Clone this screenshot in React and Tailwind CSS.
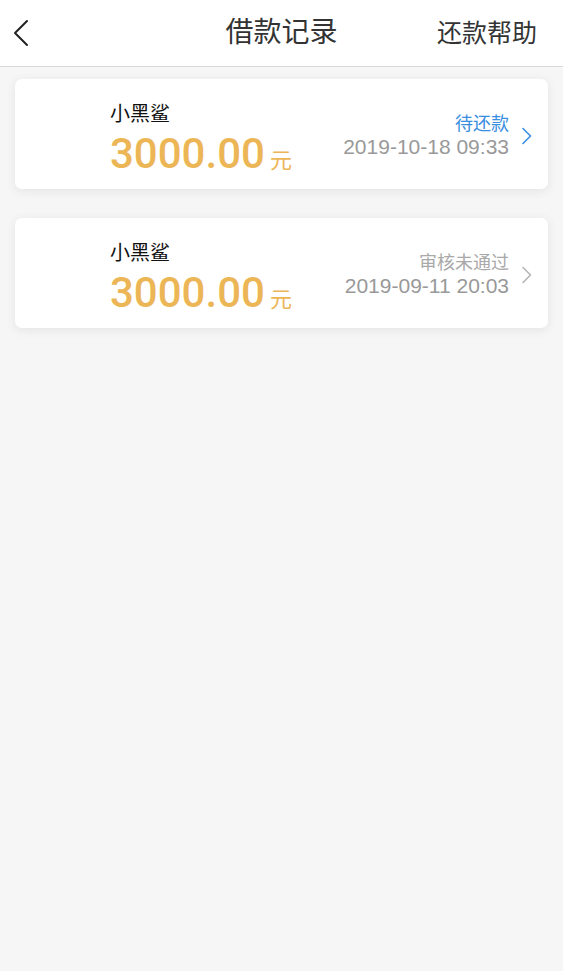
import React from "react";

const records = [
  {
    name: "小黑鲨",
    amount: "3000.00",
    status: "待还款",
    time: "2019-10-18 09:33",
    active: true,
  },
  {
    name: "小黑鲨",
    amount: "3000.00",
    status: "审核未通过",
    time: "2019-09-11 20:03",
    active: false,
  },
];

const cjk = "font-['Liberation_Sans','Noto_Sans_CJK_SC',sans-serif]";

function Chevron({ color }) {
  return (
    <svg width="12" height="18" viewBox="0 0 12 18" fill="none">
      <path d="M2 1.5 L9.5 9 L2 16.5" stroke={color} strokeWidth="1.6" strokeLinecap="round" strokeLinejoin="round" />
    </svg>
  );
}

export default function App() {
  return (
    <div className={`min-h-[971px] w-full bg-[#f6f6f6] ${cjk}`}>
      {/* Header */}
      <header className="relative flex h-[67px] items-center justify-between border-b border-[#d9d9d9] bg-white px-3">
        <button className="flex h-10 w-8 items-center">
          <svg width="18" height="28" viewBox="0 0 18 28" fill="none">
            <path d="M15 2 L3 14 L15 26" stroke="#222" strokeWidth="2" strokeLinecap="round" strokeLinejoin="round" />
          </svg>
        </button>
        <h1 className="absolute left-1/2 top-1/2 -translate-x-1/2 -translate-y-1/2 text-[28px] leading-none text-[#333]">
          借款记录
        </h1>
        <span className="pr-[14px] text-[25px] leading-none text-[#333]">还款帮助</span>
      </header>

      {/* Records */}
      <div className="flex flex-col gap-[29px] px-[15px] pt-3">
        {records.map((r, i) => (
          <div
            key={i}
            className="flex h-[110px] items-center rounded-[7px] bg-white pl-[95px] pr-[15px] shadow-[0_2px_10px_rgba(120,90,90,0.12)]"
          >
            <div className="flex flex-1 flex-col pt-[10px]">
              <p className="text-[20px] leading-none text-[#111]">{r.name}</p>
              <p className="mt-[9px] flex items-baseline text-[#ecb656]">
                <span className="font-['Roboto',sans-serif] text-[42px] font-medium leading-none">{r.amount}</span>
                <span className="ml-[5px] text-[22px] leading-none">元</span>
              </p>
            </div>
            <div className="flex flex-col items-end pt-[3px]">
              <span className={`text-[18px] leading-none ${r.active ? "text-[#3a8ee0]" : "text-[#a9a9a9]"}`}>
                {r.status}
              </span>
              <span className="mt-[3px] text-[21px] leading-none text-[#999]">{r.time}</span>
            </div>
            <div className="ml-[12px] mt-[3px] flex items-center">
              <Chevron color={r.active ? "#3a8ee0" : "#b5b5b5"} />
            </div>
          </div>
        ))}
      </div>
    </div>
  );
}
